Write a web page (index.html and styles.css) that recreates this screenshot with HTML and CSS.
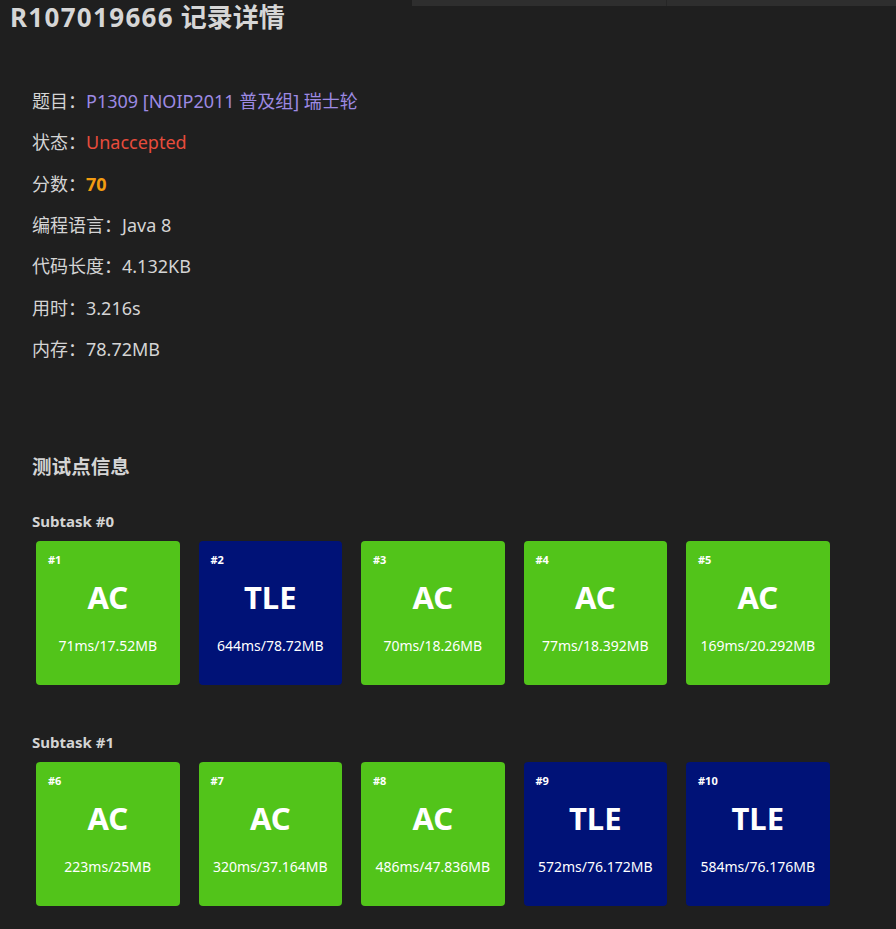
FILE: index.html
```html
<!DOCTYPE html>
<html lang="zh-CN">
<head>
<meta charset="utf-8">
<title>R107019666 记录详情</title>
<link rel="stylesheet" href="styles.css">
</head>
<body>
<div class="topbar"><div class="tb-a"></div><div class="tb-b"></div></div>
<h1 class="title"><span class="rid">R107019666</span> 记录详情</h1>
<div class="info">
  <div class="row">题目：<a class="link">P1309 [NOIP2011 普及组] 瑞士轮</a></div>
  <div class="row">状态：<span class="red">Unaccepted</span></div>
  <div class="row">分数：<span class="score">70</span></div>
  <div class="row">编程语言：Java 8</div>
  <div class="row">代码长度：4.132KB</div>
  <div class="row">用时：3.216s</div>
  <div class="row">内存：78.72MB</div>
</div>
<h2 class="section">测试点信息</h2>
<div class="subtask">
  <div class="st-title">Subtask #0</div>
  <div class="cards">
    <div class="card ac"><div class="num">#1</div><div class="res">AC</div><div class="stat">71ms/17.52MB</div></div>
    <div class="card tle"><div class="num">#2</div><div class="res">TLE</div><div class="stat">644ms/78.72MB</div></div>
    <div class="card ac"><div class="num">#3</div><div class="res">AC</div><div class="stat">70ms/18.26MB</div></div>
    <div class="card ac"><div class="num">#4</div><div class="res">AC</div><div class="stat">77ms/18.392MB</div></div>
    <div class="card ac"><div class="num">#5</div><div class="res">AC</div><div class="stat">169ms/20.292MB</div></div>
  </div>
</div>
<div class="subtask second">
  <div class="st-title">Subtask #1</div>
  <div class="cards">
    <div class="card ac"><div class="num">#6</div><div class="res">AC</div><div class="stat">223ms/25MB</div></div>
    <div class="card ac"><div class="num">#7</div><div class="res">AC</div><div class="stat">320ms/37.164MB</div></div>
    <div class="card ac"><div class="num">#8</div><div class="res">AC</div><div class="stat">486ms/47.836MB</div></div>
    <div class="card tle"><div class="num">#9</div><div class="res">TLE</div><div class="stat">572ms/76.172MB</div></div>
    <div class="card tle"><div class="num">#10</div><div class="res">TLE</div><div class="stat">584ms/76.176MB</div></div>
  </div>
</div>
</body>
</html>
```
FILE: styles.css
```css
html, body {
  margin: 0;
  padding: 0;
  background: #1f1f1f;
  color: #d4d4d4;
  font-family: "Noto Sans", "Noto Sans CJK SC", sans-serif;
}
body {
  position: relative;
  min-height: 929px;
  overflow: hidden;
}
.topbar {
  position: absolute;
  top: 0;
  left: 412px;
  right: 0;
  height: 6px;
  display: flex;
}
.tb-a {
  width: 254px;
  background: #2e2e2e;
  border-right: 1px solid #262626;
}
.tb-b {
  flex: 1;
  background: #2e2e2e;
}
.title {
  margin: 0 0 0 10px;
  font-size: 26px;
  line-height: 34px;
  font-weight: 700;
  color: #d6d6d6;
}
.rid { letter-spacing: 1.3px; }
.info {
  margin-top: 47px;
  padding-left: 32px;
}
.row {
  font-size: 18px;
  line-height: 41.33px;
  height: 41.33px;
  white-space: nowrap;
}
.link { color: #9d8ae3; }
.red { color: #e74c3c; }
.score { color: #f39c11; font-weight: 700; }
.section {
  margin: 83px 0 0 32px;
  font-size: 19.6px;
  line-height: 28px;
  font-weight: 700;
  color: #d4d4d4;
}
.subtask {
  margin-top: 30px;
  padding-left: 32px;
}
.subtask.second { margin-top: 47px; }
.st-title {
  font-size: 15px;
  line-height: 20px;
  font-weight: 700;
  color: #d4d4d4;
}
.cards {
  margin-top: 10px;
  padding-left: 4px;
  display: flex;
  gap: 19px;
}
.card {
  width: 143.5px;
  height: 144px;
  box-sizing: border-box;
  border-radius: 4px;
  padding: 12px 12px 0;
  color: #fff;
  display: flex;
  flex-direction: column;
}
.ac { background: #52c41a; }
.tle { background: #001277; }
.num {
  font-size: 11px;
  line-height: 14px;
  font-weight: 700;
}
.res {
  margin-top: 10px;
  font-size: 31px;
  line-height: 40px;
  font-weight: 700;
  text-align: center;
}
.stat {
  margin-top: 20px;
  font-size: 14px;
  line-height: 18px;
  text-align: center;
  white-space: nowrap;
}
```
